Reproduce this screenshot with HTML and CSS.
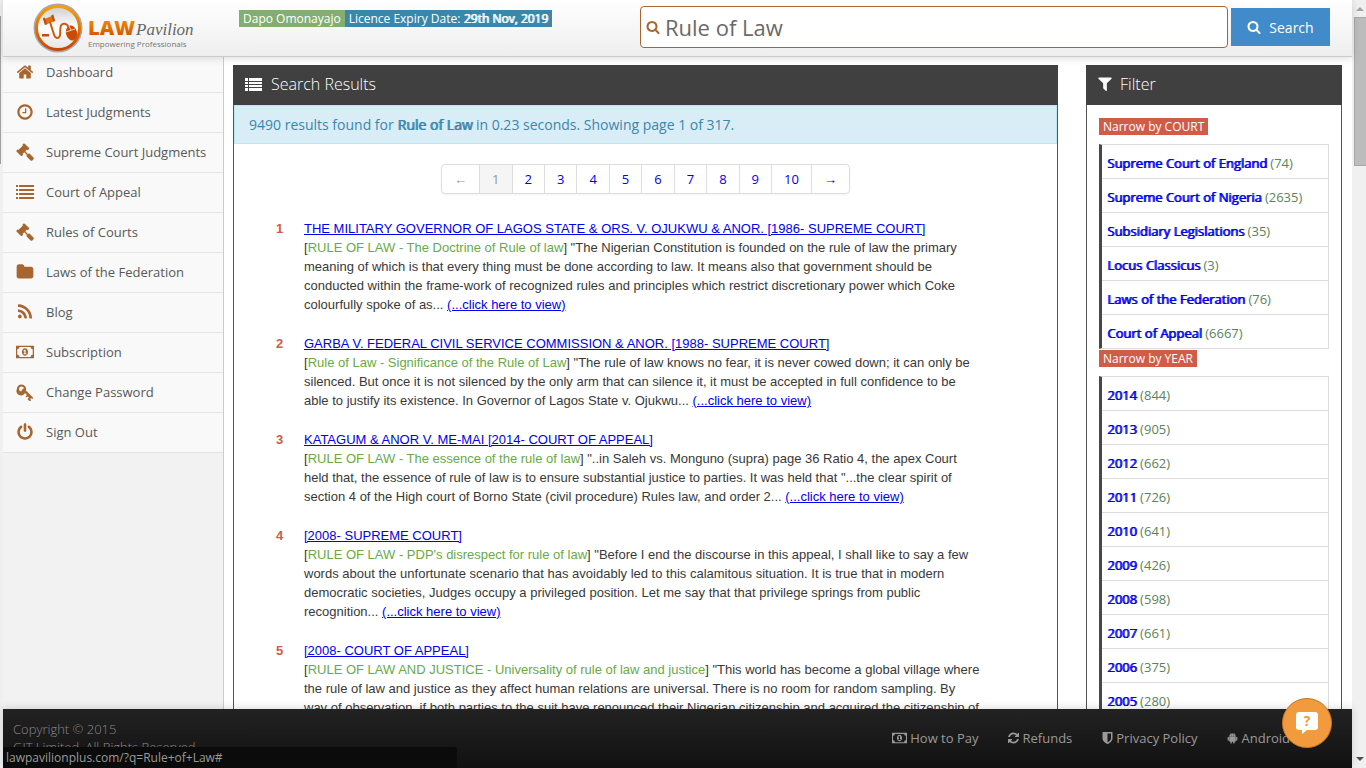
FILE: index.html
```html
<!DOCTYPE html>
<html lang="en">
<head>
    <title>Search Results - LawPavilion</title>
    <meta charset="UTF-8">
    <meta name="viewport" content="width=device-width, initial-scale=1.0">
    <link rel="stylesheet" href="styles.css">
</head>
<body>
    <!-- Icons -->
    <svg class="sprite" width="0" height="0" aria-hidden="true">
        <symbol id="home" viewBox="0 0 1792 1792"><path d="M1472 992v480q0 26-19 45t-45 19h-384v-384h-256v384h-384q-26 0-45-19t-19-45v-480q0-1 .5-3t.5-3l575-474 575 474q1 2 1 6zm223-69l-62 74q-8 9-21 11h-3q-13 0-21-7l-692-577-692 577q-12 8-24 7-13-2-21-11l-62-74q-8-10-7-23.500t11-21.500l719-599q32-26 76-26t76 26l244 204v-195q0-14 9-23t23-9h192q14 0 23 9t9 23v408l219 182q10 8 11 21.500t-7 23.500z"/></symbol>
        <symbol id="clock" viewBox="0 0 1792 1792"><path d="M1024 544v448q0 14-9 23t-23 9h-320q-14 0-23-9t-9-23v-64q0-14 9-23t23-9h224v-352q0-14 9-23t23-9h64q14 0 23 9t9 23zm416 352q0-148-73-273t-198-198-273-73-273 73-198 198-73 273 73 273 198 198 273 73 273-73 198-198 73-273zm224 0q0 209-103 385.500t-279.500 279.500-385.500 103-385.500-103-279.500-279.500-103-385.500 103-385.500 279.500-279.500 385.500-103 385.500 103 279.500 279.500 103 385.500z"/></symbol>
        <symbol id="gavel" viewBox="0 0 1792 1792"><path d="M1771 1536q0 53-37 90l-107 108q-39 37-91 37-53 0-90-37l-363-364q-38-36-38-90 0-53 43-96l-256-256-126 126q-14 14-34 14t-34-14q2 2 12.500 12t12.500 13 10 11.500 10 13.500 6 13.500 5.500 16.500 1.500 18q0 38-28 68-3 3-16.500 18t-19 20.500-18.500 16.500-22 15.500-22 9-26 4.500q-40 0-68-28l-408-408q-28-28-28-68 0-13 4.500-26t9-22 15.500-22 16.500-18.500 20.500-19 18-16.500q30-28 68-28 10 0 18 1.500t16.500 5.500 13.500 6 13.500 10 11.500 10 13 12.500 12 12.500q-14-14-14-34t14-34l348-348q14-14 34-14t34 14q-2-2-12.500-12t-12.500-13-10-11.500-10-13.500-6-13.500-5.500-16.500-1.500-18q0-38 28-68 3-3 16.500-18t19-20.500 18.500-16.500 22-15.500 22-9 26-4.500q40 0 68 28l408 408q28 28 28 68 0 13-4.500 26t-9 22-15.500 22-16.500 18.500-20.500 19-18 16.500q-30 28-68 28-10 0-18-1.500t-16.500-5.500-13.500-6-13.500-10-11.500-10-13-12.500-12-12.500q14 14 14 34t-14 34l-126 126 256 256q43-43 96-43 52 0 91 37l363 363q37 39 37 91z"/></symbol>
        <symbol id="list" viewBox="0 0 18 18"><path d="M0 2h2v2H0zM3 2h15v2H3zM0 6h2v2H0zM3 6h15v2H3zM0 10h2v2H0zM3 10h15v2H3zM0 14h2v2H0zM3 14h15v2H3z"/></symbol>
        <symbol id="list-alt" viewBox="0 0 18 18"><path d="M0 3h3v3H0zM4 3h13v3H4zM0 7h3v2H0zM4 7h13v2H4zM0 10h3v2H0zM4 10h13v2H4zM0 13h3v3H0zM4 13h13v3H4z"/></symbol>
        <symbol id="folder" viewBox="0 0 1792 1792"><path d="M1728 608v704q0 92-66 158t-158 66h-1216q-92 0-158-66t-66-158v-960q0-92 66-158t158-66h320q92 0 158 66t66 158v32h672q92 0 158 66t66 158z"/></symbol>
        <symbol id="rss" viewBox="0 0 1792 1792"><path d="M576 1344q0 80-56 136t-136 56-136-56-56-136 56-136 136-56 136 56 56 136zm512 123q2 28-17 48-18 21-47 21h-135q-25 0-43-16.500t-20-41.500q-22-229-184.500-391.500t-391.500-184.500q-25-2-41.500-20t-16.500-43v-135q0-29 21-47 17-17 43-17h5q160 13 306 80.500t259 181.500q114 113 181.500 259t80.500 306zm512 2q2 27-18 47-18 20-46 20h-143q-26 0-44.500-17.500t-19.500-42.500q-12-215-101-408.500t-231.500-336-336-231.500-408.500-102q-25-1-42.500-19.500t-17.500-43.500v-143q0-28 20-46 18-18 44-18h3q262 13 501.500 120t425.500 294q187 186 294 425.500t120 501.500z"/></symbol>
        <symbol id="money" viewBox="0 0 20 14"><path fill-rule="evenodd" d="M0 0h20v14H0zM3.800 1.500a2.300 2.300 0 0 1-2.400 2.400v6.200a2.300 2.300 0 0 1 2.400 2.400h12.400a2.300 2.300 0 0 1 2.400-2.400V3.900a2.300 2.300 0 0 1-2.400-2.400zM10 2.800c2 0 3.400 1.900 3.400 4.200S12 11.200 10 11.200 6.600 9.300 6.600 7 8 2.800 10 2.800zM9.600 4.400L8 5.700l.7.800.6-.4v2.500h-1v1h3.400v-1h-1V4.400z"/></symbol>
        <symbol id="key" viewBox="0 0 18 18"><path fill-rule="evenodd" d="M5.500 1.500a4.500 4.500 0 0 1 4.300 6.100l7.500 7.200-1.100 1.200-1.100-.9-1 1 1 1.100-1.300 1.200-1.200-1.200-1.100-1.100 1.500-1.500-1-1-1.100 1-1.300-1.200 1.400-1.400-2-2A4.500 4.500 0 0 1 .9 6 4.500 4.500 0 0 1 5.500 1.500zm0 2A2.500 2.500 0 0 0 3 6a2.300 2.300 0 0 0 2.700 2.200C5.500 6.700 6.700 5.500 8 5.500a2.500 2.500 0 0 0-2.500-2z"/></symbol>
        <symbol id="power" viewBox="0 0 1792 1792"><path d="M1664 896q0 156-61 298t-164 245-245 164-298 61-298-61-245-164-164-245-61-298q0-182 80.500-343t226.500-270q43-32 95.500-25t83.500 50q32 42 24.500 94.500t-49.500 84.500q-98 74-151.500 181t-53.500 228q0 104 40.500 198.500t109.500 163.500 163.500 109.500 198.500 40.500 198.500-40.500 163.500-109.500 109.500-163.500 40.500-198.500q0-121-53.500-228t-151.500-181q-42-32-49.500-84.500t24.500-94.500q31-43 84-50t95 25q146 109 226.500 270t80.500 343zm-640-768v640q0 52-38 90t-90 38-90-38-38-90v-640q0-52 38-90t90-38 90 38 38 90z"/></symbol>
        <symbol id="search" viewBox="0 0 1792 1792"><path d="M1216 832q0-185-131.500-316.500t-316.500-131.500-316.500 131.500-131.500 316.500 131.500 316.500 316.500 131.500 316.500-131.500 131.500-316.500zm512 832q0 52-38 90t-90 38q-54 0-90-38l-343-342q-179 124-399 124-143 0-273.500-55.500t-225-150-150-225-55.500-273.500 55.500-273.500 150-225 225-150 273.500-55.500 273.500 55.500 225 150 150 225 55.500 273.500q0 220-124 399l343 343q37 37 37 90z"/></symbol>
        <symbol id="filter" viewBox="192 192 1408 1472"><path d="M1595 295q17 41-14 70l-493 493v742q0 42-39 59-13 5-25 5-27 0-45-19l-256-256q-19-19-19-45v-486l-493-493q-31-29-14-70 17-39 59-39h1280q42 0 59 39z"/></symbol>
        <symbol id="refresh" viewBox="128 128 1536 1536"><path d="M1639 1056q0 5-1 7-64 268-268 434.500t-478 166.500q-146 0-282.500-55t-243.500-157l-129 129q-19 19-45 19t-45-19-19-45v-448q0-26 19-45t45-19h448q26 0 45 19t19 45-19 45l-137 137q71 66 161 102t187 36q134 0 250-65t186-179q11-17 53-117 8-23 30-23h192q13 0 22.500 9.500t9.500 22.500zm25-800v448q0 26-19 45t-45 19h-448q-26 0-45-19t-19-45 19-45l138-138q-148-137-349-137-134 0-250 65t-186 179q-11 17-53 117-8 23-30 23h-199q-13 0-22.500-9.500t-9.500-22.500v-7q65-268 270-434.500t480-166.500q146 0 284 55.500t245 156.500l130-129q19-19 45-19t45 19 19 45z"/></symbol>
        <symbol id="shield" viewBox="256 128 1280 1536"><path d="M1344 960v-640h-448v1137q119-63 213-137 235-184 235-360zm192-768v768q0 86-33.500 170.500t-83 150-118 127.500-126.500 103-121 77.500-89.500 49.500-42.500 20q-12 6-26 6t-26-6q-16-7-42.500-20t-89.500-49.500-121-77.500-126.500-103-118-127.500-83-150-33.500-170.500v-768q0-26 19-45t45-19h1152q26 0 45 19t19 45z"/></symbol>
        <symbol id="android" viewBox="0 0 14 14"><path fill-rule="evenodd" d="M4 .2l1 1.500a4.500 4.500 0 0 1 4 0l1-1.500.3.200-.9 1.500A3.800 3.800 0 0 1 11.200 5H2.800a3.800 3.800 0 0 1 1.800-3.100L3.700.4zM5 3v.7h.7V3zm3.300 0v.7H9V3zM2.800 5.400h8.400v5.400a1 1 0 0 1-1 1h-.6v1.500a.8.8 0 0 1-1.700 0v-1.500H6.100v1.500a.8.8 0 0 1-1.700 0v-1.500h-.6a1 1 0 0 1-1-1zM.8 6.200a.8.8 0 0 1 1.600 0v3.400a.8.8 0 0 1-1.600 0zm10.800 0a.8.8 0 0 1 1.600 0v3.400a.8.8 0 0 1-1.600 0z"/></symbol>
    </svg>

    <div class="window-edge"></div>

    <div class="page">
        <header class="header">
            <a href="#" class="logo" aria-label="LawPavilion">
                <svg width="170" height="52" viewBox="0 0 170 52">
                    <defs>
                        <linearGradient id="orange" x1="0" y1="0" x2="0" y2="1">
                            <stop offset="0" stop-color="#f8a000"/>
                            <stop offset="1" stop-color="#cc4405"/>
                        </linearGradient>
                        <linearGradient id="disc" x1="0" y1="0" x2="0" y2="1">
                            <stop offset="0" stop-color="#cfcfcf"/>
                            <stop offset="0.500" stop-color="#ffffff"/>
                            <stop offset="1" stop-color="#e4e4e4"/>
                        </linearGradient>
                    </defs>
                    <circle cx="25" cy="26" r="24.500" fill="#a9a9a9"/>
                    <circle cx="25" cy="26" r="21.500" fill="url(#disc)" stroke="url(#orange)" stroke-width="3"/>
                    <path d="M11.500 17l8-3.200 1.500 5.500-8 3.200z" fill="#dc7010"/>
                    <path d="M9.800 16.300l2-.7 2.100 6.800-2 .7zM18.300 13.200l2-.6 1.900 6.400-2 .7z" fill="#bf4e08"/>
                    <path d="M17 20l3.500 11c1.500 6 5.500 6.500 6.500 2 .6-3-.5-7 1-9.500 2-3 6-2 7.500 1.500" fill="none" stroke="#cf5a0c" stroke-width="2"/>
                    <ellipse cx="38.500" cy="31" rx="5.500" ry="7.500" transform="rotate(-15 38.500 31)" fill="#cc4a08"/>
                    <path d="M33 30l9-3M36 24l2 4" stroke="#f6d2b0" stroke-width="1"/>
                    <path d="M9 32h7v2.500H9z" fill="#c94b08"/>
                    <text x="55" y="33" class="logo-law" fill="url(#orange)">LAW</text>
                    <text x="103" y="33" class="logo-pavilion">Pavilion</text>
                    <text x="55" y="45" class="logo-slogan">Empowering Professionals</text>
                </svg>
            </a>
            <div class="account">
                <span class="tag tag-green">Dapo Omonayajo</span><span class="tag tag-blue">Licence Expiry Date: <b>29th Nov, 2019</b></span>
            </div>
            <form class="search">
                <label class="search-box">
                    <svg class="icon"><use href="#search"/></svg>
                    <input type="text" name="q" value="Rule of Law" aria-label="Search">
                </label>
                <button type="button" class="search-button"><svg class="icon"><use href="#search"/></svg>Search</button>
            </form>
        </header>

        <div class="body">
            <nav class="sidebar">
                <ul>
                    <li><a href="#"><svg class="icon"><use href="#home"/></svg>Dashboard</a></li>
                    <li><a href="#"><svg class="icon"><use href="#clock"/></svg>Latest Judgments</a></li>
                    <li><a href="#"><svg class="icon"><use href="#gavel"/></svg>Supreme Court Judgments</a></li>
                    <li><a href="#"><svg class="icon"><use href="#list"/></svg>Court of Appeal</a></li>
                    <li><a href="#"><svg class="icon"><use href="#gavel"/></svg>Rules of Courts</a></li>
                    <li><a href="#"><svg class="icon"><use href="#folder"/></svg>Laws of the Federation</a></li>
                    <li><a href="#"><svg class="icon"><use href="#rss"/></svg>Blog</a></li>
                    <li><a href="#"><svg class="icon"><use href="#money"/></svg>Subscription</a></li>
                    <li><a href="#"><svg class="icon"><use href="#key"/></svg>Change Password</a></li>
                    <li><a href="#"><svg class="icon"><use href="#power"/></svg>Sign Out</a></li>
                </ul>
            </nav>

            <main class="content">
                <section class="panel">
                    <h2><svg class="icon"><use href="#list-alt"/></svg>Search Results</h2>
                    <p class="summary">9490 results found for <b>Rule of Law</b> in 0.23 seconds. Showing page 1 of 317.</p>
                    <div class="pagination">
                        <span>←</span>
                        <span class="active">1</span>
                        <a href="#">2</a>
                        <a href="#">3</a>
                        <a href="#">4</a>
                        <a href="#">5</a>
                        <a href="#">6</a>
                        <a href="#">7</a>
                        <a href="#">8</a>
                        <a href="#">9</a>
                        <a href="#">10</a>
                        <a href="#">→</a>
                    </div>
                    <div class="results">
                        <article>
                            <b class="number">1</b>
                            <div>
                                <a href="#" class="case">THE MILITARY GOVERNOR OF LAGOS STATE &amp; ORS. V. OJUKWU &amp; ANOR. [1986- SUPREME COURT]</a>
                                <p>[<span class="subject">RULE OF LAW - The Doctrine of Rule of law</span>] "The Nigerian Constitution is founded on the rule of law the primary meaning of which is that every thing must be done according to law. It means also that government should be conducted within the frame-work of recognized rules and principles which restrict discretionary power which Coke colourfully spoke of as... <a href="#">(...click here to view)</a></p>
                            </div>
                        </article>
                        <article>
                            <b class="number">2</b>
                            <div>
                                <a href="#" class="case">GARBA V. FEDERAL CIVIL SERVICE COMMISSION &amp; ANOR. [1988- SUPREME COURT]</a>
                                <p>[<span class="subject">Rule of Law - Significance of the Rule of Law</span>] "The rule of law knows no fear, it is never cowed down; it can only be silenced. But once it is not silenced by the only arm that can silence it, it must be accepted in full confidence to be able to justify its existence. In Governor of Lagos State v. Ojukwu... <a href="#">(...click here to view)</a></p>
                            </div>
                        </article>
                        <article>
                            <b class="number">3</b>
                            <div>
                                <a href="#" class="case">KATAGUM &amp; ANOR V. ME-MAI [2014- COURT OF APPEAL]</a>
                                <p>[<span class="subject">RULE OF LAW - The essence of the rule of law</span>] "..in Saleh vs. Monguno (supra) page 36 Ratio 4, the apex Court held that, the essence of rule of law is to ensure substantial justice to parties. It was held that "...the clear spirit of section 4 of the High court of Borno State (civil procedure) Rules law, and order 2... <a href="#">(...click here to view)</a></p>
                            </div>
                        </article>
                        <article>
                            <b class="number">4</b>
                            <div>
                                <a href="#" class="case">[2008- SUPREME COURT]</a>
                                <p>[<span class="subject">RULE OF LAW - PDP's disrespect for rule of law</span>] "Before I end the discourse in this appeal, I shall like to say a few words about the unfortunate scenario that has avoidably led to this calamitous situation. It is true that in modern democratic societies, Judges occupy a privileged position. Let me say that that privilege springs from public recognition... <a href="#">(...click here to view)</a></p>
                            </div>
                        </article>
                        <article>
                            <b class="number">5</b>
                            <div>
                                <a href="#" class="case">[2008- COURT OF APPEAL]</a>
                                <p>[<span class="subject">RULE OF LAW AND JUSTICE - Universality of rule of law and justice</span>] "This world has become a global village where the rule of law and justice as they affect human relations are universal. There is no room for random sampling. By way of observation, if both parties to the suit have renounced their Nigerian citizenship and acquired the citizenship of</p>
                            </div>
                        </article>
                    </div>
                </section>

                <aside class="panel">
                    <h2><svg class="icon icon-filter"><use href="#filter"/></svg>Filter</h2>
                    <div class="filters">
                        <h3 class="tag tag-red">Narrow by COURT</h3>
                        <ul>
                            <li><a href="#">Supreme Court of England</a> (74)</li>
                            <li><a href="#">Supreme Court of Nigeria</a> (2635)</li>
                            <li><a href="#">Subsidiary Legislations</a> (35)</li>
                            <li><a href="#">Locus Classicus</a> (3)</li>
                            <li><a href="#">Laws of the Federation</a> (76)</li>
                            <li><a href="#">Court of Appeal</a> (6667)</li>
                        </ul>
                        <h3 class="tag tag-red">Narrow by YEAR</h3>
                        <ul>
                            <li><a href="#">2014</a> (844)</li>
                            <li><a href="#">2013</a> (905)</li>
                            <li><a href="#">2012</a> (662)</li>
                            <li><a href="#">2011</a> (726)</li>
                            <li><a href="#">2010</a> (641)</li>
                            <li><a href="#">2009</a> (426)</li>
                            <li><a href="#">2008</a> (598)</li>
                            <li><a href="#">2007</a> (661)</li>
                            <li><a href="#">2006</a> (375)</li>
                            <li><a href="#">2005</a> (280)</li>
                        </ul>
                    </div>
                </aside>
            </main>
        </div>

        <footer class="footer">
            <p>Copyright © 2015<br>GIT Limited. All Rights Reserved.</p>
            <nav>
                <a href="#"><svg class="icon icon-money"><use href="#money"/></svg>How to Pay</a>
                <a href="#"><svg class="icon"><use href="#refresh"/></svg>Refunds</a>
                <a href="#"><svg class="icon"><use href="#shield"/></svg>Privacy Policy</a>
                <a href="#"><svg class="icon"><use href="#android"/></svg>Android</a>
            </nav>
        </footer>
    </div>

    <div class="scrollbar">
        <svg width="14" height="16" viewBox="0 0 14 16"><path d="M4 11l4-4 4 4z" fill="#a3a3a3"/></svg>
        <div class="thumb"></div>
        <svg width="14" height="16" viewBox="0 0 14 16"><path d="M4 5l4 4 4-4z" fill="#505050"/></svg>
    </div>

    <button type="button" class="chat" aria-label="Help">
        <svg width="24" height="24" viewBox="0 0 24 24">
            <path d="M4 1h16a3 3 0 0 1 3 3v12a3 3 0 0 1-3 3h-8l-5 4v-4H4a3 3 0 0 1-3-3V4a3 3 0 0 1 3-3z" fill="#fff"/>
            <text x="12" y="15" text-anchor="middle">?</text>
        </svg>
    </button>
    <div class="status">lawpavilionplus.com/?q=Rule+of+Law#</div>
</body>
</html>
```
FILE: styles.css
```css
html, body {
    height: 100%;
    margin: 0;
}
body {
    display: flex;
    overflow: hidden;
    background: #ffffff;
    color: #555555;
    font-family: "Open Sans", sans-serif;
    font-size: 13px;
}
ul, p, h2, h3 {
    margin: 0;
    padding: 0;
    list-style: none;
}
a {
    color: #0000ee;
}
.sprite {
    position: absolute;
}
.icon {
    width: 18px;
    height: 18px;
    flex: none;
    fill: currentColor;
}
.window-edge {
    width: 3px;
    background: linear-gradient(#a0a0a0, #a0a0a0) 0 16px / 1px 148px no-repeat #f0f0f0;
}
.page {
    flex: 1;
    min-width: 0;
    display: flex;
    flex-direction: column;
}

/* Header */
.header {
    display: flex;
    justify-content: space-between;
    height: 56px;
    padding-right: 22px;
    border-bottom: 1px solid #cccccc;
    background: linear-gradient(#ffffff, #eeeeee);
    box-shadow: 0 1px 8px rgba(0, 0, 0, 0.15);
    z-index: 1;
}
.logo {
    width: 206px;
    padding: 2px 0 0 30px;
}
.logo-law {
    font: 800 20px "Open Sans", sans-serif;
}
.logo-pavilion {
    font: italic 17px "Liberation Serif", serif;
    fill: #666666;
}
.logo-slogan {
    font: 400 8px "Open Sans", sans-serif;
    fill: #777777;
}
.account {
    flex: 1;
    display: flex;
    align-items: flex-start;
    padding-top: 10px;
}
.tag {
    padding: 0 4px;
    color: #ffffff;
    font-size: 12px;
    font-weight: 400;
    line-height: 17px;
    white-space: nowrap;
}
.tag-green {
    background: #82af6f;
}
.tag-blue {
    background: #3a87ad;
}
.tag-red {
    background: #d15b47;
}
/* Regular face thickened by one pixel */
.tag b,
.summary b,
.filters li a {
    font-weight: 400;
    text-shadow: 1px 0 0 currentColor;
}
.search {
    flex: 0 0 690px;
    display: flex;
    align-items: center;
    gap: 3px;
    height: 54px;
}
.search-box {
    flex: 1;
    display: flex;
    align-items: center;
    height: 40px;
    padding-left: 5px;
    border: 1px solid #a8652f;
    border-radius: 4px;
    background: #ffffff;
    color: #a8652f;
}
.search-box .icon,
.search-button .icon {
    width: 14px;
    height: 14px;
}
.search-box input {
    flex: 1;
    min-width: 0;
    padding: 0 0 0 5px;
    border: none;
    outline: none;
    background: transparent;
    color: #696969;
    font: 22px "Open Sans", sans-serif;
}
.search-button {
    display: flex;
    align-items: center;
    justify-content: center;
    gap: 8px;
    width: 99px;
    height: 38px;
    border: none;
    background: #428bca;
    color: #ffffff;
    font: 14px "Open Sans", sans-serif;
}

/* Sidebar */
.body {
    flex: 1;
    min-height: 0;
    display: flex;
    overflow: hidden;
}
.sidebar {
    flex: 0 0 220px;
    border-right: 1px solid #cccccc;
    background: #f2f2f2;
}
.sidebar ul {
    margin-top: -4px;
}
.sidebar a {
    display: flex;
    align-items: center;
    gap: 12px;
    height: 37px;
    padding: 0 0 2px 13px;
    border-bottom: 1px solid #e5e5e5;
    background: #f9f9f9;
    color: #585858;
    text-decoration: none;
}
.sidebar .icon {
    color: #a8652f;
}

/* Panels */
.content {
    flex: 1;
    display: grid;
    grid-template-columns: 1fr 256px;
    gap: 28px;
    padding: 8px 10px 0 9px;
}
.panel {
    border: 1px solid #555555;
    border-top: none;
}
.panel h2 {
    display: flex;
    align-items: center;
    gap: 8px;
    height: 38px;
    margin: 0 -1px;
    padding: 0 0 2px 12px;
    background: #404040;
    color: #ffffff;
    font-size: 16px;
    font-weight: 300;
}
.summary {
    padding: 0 14px;
    border: 1px solid #bce8f1;
    background: #d9edf7;
    color: #3a87ad;
    font-size: 14px;
    line-height: 37px;
}
.pagination {
    display: flex;
    width: max-content;
    margin: 20px auto 25px;
    border: 1px solid #dddddd;
    border-radius: 4px;
    box-shadow: 0 1px 2px rgba(0, 0, 0, 0.05);
    line-height: 28px;
}
.pagination a,
.pagination span {
    padding: 0 12px;
    border-left: 1px solid #dddddd;
    color: #0000ee;
    text-decoration: none;
}
.pagination span {
    color: #999999;
}
.pagination span:first-child {
    border-left: none;
}
.pagination .active {
    background: #f5f5f5;
}

/* Results */
.results {
    display: grid;
    gap: 20px;
    padding: 0 76px 0 42px;
    color: #393939;
    font-family: "Liberation Sans", Arial, sans-serif;
    line-height: 19px;
}
.results article {
    display: grid;
    grid-template-columns: 28px 1fr;
}
.number {
    color: #d15b47;
}
.subject {
    color: #69aa46;
}

/* Filter */
.icon-filter {
    width: 14px;
    height: 14px;
}
.filters {
    padding: 13px 12px 0;
}
.filters .tag {
    width: max-content;
    margin-bottom: 9px;
}
.filters ul {
    margin-bottom: 1px;
    border: 1px solid #dddddd;
    border-left: 3px solid #484848;
}
.filters li {
    height: 33px;
    padding-left: 5px;
    color: #5b835b;
    line-height: 36px;
}
.filters li + li {
    border-top: 1px solid #dddddd;
}
.filters li a {
    text-decoration: none;
}

/* Footer */
.footer {
    display: flex;
    justify-content: space-between;
    height: 59px;
    padding: 0 62px 0 10px;
    background: linear-gradient(#222222, #111111);
    box-shadow: 0 -1px 8px rgba(0, 0, 0, 0.15);
    color: #888888;
    line-height: 18px;
    z-index: 1;
}
.footer p {
    padding-top: 11px;
    font-weight: 300;
}
.footer nav {
    display: flex;
    align-items: center;
    gap: 30px;
    padding-bottom: 2px;
}
.footer a {
    display: flex;
    align-items: center;
    gap: 3px;
    color: #999999;
    text-decoration: none;
}
.footer .icon {
    width: 11px;
    height: 12px;
}
.footer .icon-money {
    width: 15px;
}

/* Scrollbar */
.scrollbar {
    display: flex;
    flex-direction: column;
    justify-content: space-between;
    width: 14px;
    background: #f0f0f0;
}
.thumb {
    height: 147px;
    margin: 1px 0 auto 2px;
    border: 1px solid #a8a8a8;
    border-right: none;
    background: #bcbcbc;
}

.chat {
    position: fixed;
    right: 34px;
    bottom: 20px;
    z-index: 3;
    display: flex;
    align-items: center;
    justify-content: center;
    width: 50px;
    height: 50px;
    border: 1px solid #c87820;
    border-radius: 50%;
    background: #f19a3e;
}
.chat text {
    fill: #f19a3e;
    font: 700 14px "Open Sans", sans-serif;
}
.status {
    position: fixed;
    left: 3px;
    bottom: 0;
    z-index: 2;
    width: 451px;
    padding-left: 3px;
    border-top-right-radius: 3px;
    background: #0b0b0b;
    color: #999999;
    font-size: 12px;
    line-height: 21px;
}
```
